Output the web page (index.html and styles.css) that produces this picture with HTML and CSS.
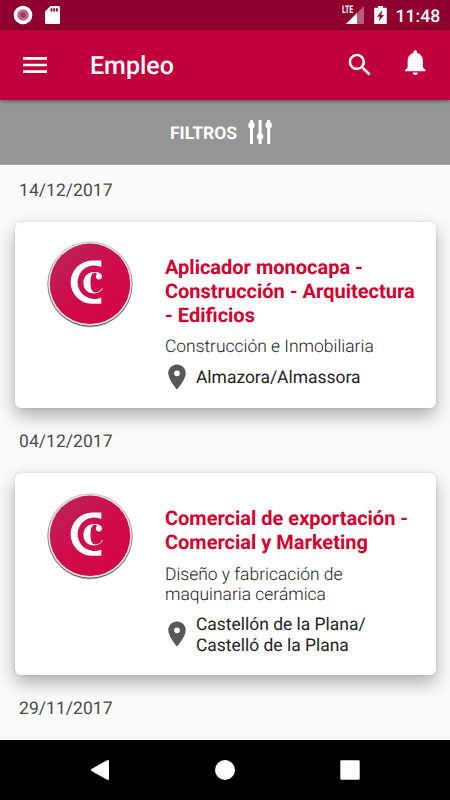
FILE: index.html
```html
<!DOCTYPE html>
<html lang="es">
<head>
<meta charset="utf-8">
<title>Empleo</title>
<link rel="stylesheet" href="styles.css">
</head>
<body>
<svg class="defs" width="0" height="0" aria-hidden="true">
  <defs>
    <linearGradient id="disc" x1="0.1" y1="0.1" x2="0.8" y2="0.9">
      <stop offset="0" stop-color="#bd2257"/>
      <stop offset="0.55" stop-color="#d00b4a"/>
      <stop offset="1" stop-color="#d40545"/>
    </linearGradient>
    <linearGradient id="rim" x1="0" y1="0" x2="0" y2="1">
      <stop offset="0" stop-color="#c8c8c8"/>
      <stop offset="0.5" stop-color="#999"/>
      <stop offset="1" stop-color="#555"/>
    </linearGradient>
    <symbol id="logo" viewBox="0 0 90 90">
      <circle cx="45" cy="46" r="42.500" fill="#000" opacity=".22"/>
      <circle cx="45" cy="45" r="42.200" fill="#e4e2e3" stroke="url(#rim)" stroke-width="1"/>
      <circle cx="45" cy="44.800" r="40.200" fill="url(#disc)"/>
      <path fill="#fff" d="M56.300 21.600H47.300A21.700 21.600 0 0 0 47.300 64.800H56.300V58.500A16.800 16.800 0 1 1 56.300 27.900Z"/>
      <path fill="#fff" d="M57 37.900A3.100 3.100 0 1 1 51.800 35.200C51.900 34.100 50.700 33.700 49.600 33.700C46.900 33.700 45.500 37.500 45.500 43.600C45.500 50 46.900 53.400 50.500 53.400C53.700 53.400 56 51.500 57 48.700L57.800 49.100C56.500 52.600 53.500 54.500 49.200 54.500C42.700 54.500 38.400 50.400 38.400 43.800C38.400 37.400 42.900 32.900 49.500 32.900C54 32.900 57.100 34.600 57 37.900Z"/>
    </symbol>
    <symbol id="pin" viewBox="0 0 24 24">
      <path fill="#555759" d="M12 2C8.130 2 5 5.130 5 9c0 5.250 7 13 7 13s7-7.750 7-13c0-3.870-3.130-7-7-7zm0 9.300a2.300 2.300 0 1 1 0-4.600 2.300 2.300 0 0 1 0 4.600z"/>
    </symbol>
  </defs>
</svg>
<div class="screen">
  <div class="status">
    <svg class="st-rec" viewBox="0 0 20 20"><circle cx="10" cy="10" r="9.300" fill="#fff"/><circle cx="10" cy="10" r="5.800" fill="#c0688a"/><circle cx="10" cy="10" r="2.800" fill="#a03960"/></svg>
    <svg class="st-sd" viewBox="0 0 15 18"><path fill="#fff" d="M5.500 0H13.500A1.500 1.500 0 0 1 15 1.500V16.500A1.500 1.500 0 0 1 13.500 18H1.500A1.500 1.500 0 0 1 0 16.500V5.500Z"/><path fill="#8f002e" d="M5.600 2.200h1.800v3.400h-1.800zM8.300 2.200h1.800v3.400h-1.800zM11 2.200h1.800v3.400h-1.800z"/></svg>
    <span class="lte">LTE</span>
    <svg class="st-sig" viewBox="0 0 18 18"><path fill="#b95c80" d="M18 0V18H0Z"/><path fill="#fff" d="M11 7V18H0Z"/></svg>
    <svg class="st-bat" viewBox="0 0 13 18"><path fill="#fff" d="M4 0h5v1.800h3a.8.8 0 0 1 .8.8v14.600a.8.8 0 0 1-.8.8H1a.8.8 0 0 1-.8-.8V2.600a.8.8 0 0 1 .8-.8h3z"/><path fill="#8f002e" d="M8.300 4.300 3 10.700h3L4.800 15.500 10 9H7.200z"/></svg>
    <span class="clock">11:48</span>
  </div>
  <header class="bar">
    <svg class="i-menu" viewBox="0 0 24 24"><path fill="#fff" d="M3 18h18v-2H3v2zm0-5h18v-2H3v2zm0-7v2h18V6H3z"/></svg>
    <h1>Empleo</h1>
    <svg class="i-search" viewBox="0 0 24 24"><path fill="#fff" d="M15.500 14h-.79l-.28-.27C15.410 12.590 16 11.110 16 9.500 16 5.910 13.090 3 9.500 3S3 5.910 3 9.500 5.910 16 9.500 16c1.610 0 3.090-.59 4.230-1.570l.27.28v.79l5 4.990L20.490 19l-4.990-5zm-6 0C7.010 14 5 11.990 5 9.500S7.010 5 9.500 5 14 7.010 14 9.500 11.990 14 9.500 14z"/></svg>
    <svg class="i-bell" viewBox="0 0 24 24"><path fill="#fff" d="M12 22c1.100 0 2-.9 2-2h-4c0 1.100.89 2 2 2zm6-6v-5c0-3.070-1.640-5.640-4.500-6.320V4c0-.83-.67-1.500-1.500-1.500s-1.500.67-1.500 1.500v.68C7.630 5.360 6 7.920 6 11v5l-2 2v1h16v-1l-2-2z"/></svg>
  </header>
  <div class="filters">
    <span>FILTROS</span>
    <svg viewBox="0 0 25 24"><path stroke="#fff" stroke-width="3" d="M3.500 0v24M12.100 0v24M20.700 0v24"/><g fill="#fff"><circle cx="3.500" cy="5.300" r="3.200"/><circle cx="12.100" cy="16.500" r="3.200"/><circle cx="20.700" cy="5.300" r="3.200"/></g></svg>
  </div>
  <main class="list">
    <div class="date">14/12/2017</div>
    <article class="card first">
      <svg class="logo"><use href="#logo"/></svg>
      <div class="info">
        <h2>Aplicador monocapa -<br>Construcción - Arquitectura<br>- Edificios</h2>
        <p class="sector">Construcción e Inmobiliaria</p>
        <div class="place"><svg><use href="#pin"/></svg><span>Almazora/Almassora</span></div>
      </div>
    </article>
    <div class="date">04/12/2017</div>
    <article class="card second">
      <svg class="logo"><use href="#logo"/></svg>
      <div class="info">
        <h2>Comercial de exportación -<br>Comercial y Marketing</h2>
        <p class="sector">Diseño y fabricación de<br>maquinaria cerámica</p>
        <div class="place"><svg><use href="#pin"/></svg><span>Castellón de la Plana/<br>Castelló de la Plana</span></div>
      </div>
    </article>
    <div class="date last">29/11/2017</div>
  </main>
  <nav class="nav">
    <svg viewBox="0 0 20 20"><path fill="#fff" d="M17.600 0Q19 0 19 1.200V18.800Q19 20 17.600 20L1.500 11Q.2 10 1.500 9Z"/></svg>
    <svg viewBox="0 0 20 20"><circle cx="10" cy="10" r="10" fill="#fff"/></svg>
    <svg viewBox="0 0 20 20"><rect x=".3" y=".3" width="19.400" height="19.400" rx="1.200" fill="#fff"/></svg>
  </nav>
</div>
</body>
</html>
```
FILE: styles.css
```css
* { box-sizing: border-box; }
body { margin: 0; font-family: Roboto, "Liberation Sans", sans-serif; background: #fafafa; text-rendering: geometricPrecision; }
svg { display: block; flex: none; }
h1, h2, p { margin: 0; }
.defs { position: absolute; }
.screen { width: 450px; height: 800px; display: flex; flex-direction: column; overflow: hidden; }

.status { flex: none; height: 30px; background: #8f002e; display: flex; align-items: center; padding: 0 10px 0 12.600px; color: #fff; }
.st-rec { width: 20px; height: 20px; }
.st-sd { width: 15px; height: 18px; margin-left: 12.400px; }
.lte { margin-left: auto; align-self: flex-start; margin-top: 4px; font-size: 10.500px; line-height: 12px; font-weight: 700; width: 12px; margin-right: -8px; transform: scaleX(.66); transform-origin: left; }
.st-sig { width: 18px; height: 18px; margin-right: 10px; clip-path: polygon(0 48%, 50% 48%, 50% 0, 100% 0, 100% 100%, 0 100%); }
.st-bat { width: 13px; height: 18px; margin-right: 8.500px; }
.clock { width: 44.500px; font-size: 17.600px; font-weight: 500; line-height: 24px; margin-top: 3px; white-space: nowrap; }

.bar { flex: none; height: 70px; background: #c0003d; display: flex; align-items: flex-start; padding-left: 19px; color: #fff; box-shadow: 0 1px 4px rgba(0,0,0,.45); position: relative; }
.i-menu { width: 32px; height: 32px; margin-top: 18.500px; }
.bar h1 { font-size: 25px; font-weight: 500; line-height: 30px; margin: 22px auto 0 39px; }
.i-search { width: 30px; height: 30px; margin-top: 19.800px; }
.i-bell { width: 30.600px; height: 30.600px; margin: 17px 19.500px 0 25px; }

.filters { flex: none; height: 64.500px; background: #959595; color: #fff; display: flex; align-items: center; padding: 1px 0 0 170px; gap: 10px; font-size: 17.500px; font-weight: 700; border-bottom: 1px solid #a9a9a9; }
.filters span { width: 68px; white-space: nowrap; padding-top: 3px; }
.filters svg { width: 25px; height: 24px; }

.list { flex: 1; min-height: 0; background: #fafafa; overflow: hidden; }
.date { height: 57px; padding: 15px 0 0 19px; font-size: 17.500px; line-height: 22px; color: #4b4b4b; letter-spacing: .05px; }
.card { margin: 0 14.500px; background: #fff; border-radius: 6px; display: flex; align-items: flex-start; box-shadow: 0 8px 18px rgba(0,0,0,.3), 0 0 3px rgba(0,0,0,.12); }
.card.first { height: 186px; }
.card.second { height: 202px; }
.card + .date { height: 65.500px; padding-top: 23px; }
.card + .date.last { margin-top: 20.500px; padding-top: 2.500px; height: 50px; background: #fafafa; position: relative; }
.logo { width: 90px; height: 90px; margin: 17.500px 0 0 30.200px; }
.info { margin: 33px 0 0 30.300px; }
.info h2 { font-size: 20px; font-weight: 700; line-height: 24px; color: #d0002f; white-space: nowrap; }
.sector { font-size: 17.450px; font-weight: 300; line-height: 20.500px; color: #222; margin-top: 10.500px; white-space: nowrap; }
.place { display: flex; align-items: center; color: #222; font-size: 17.450px; line-height: 20.500px; margin: 4px 0 0 -3px; white-space: nowrap; gap: 4px; }
.place svg { width: 30px; height: 30px; }
.place span { padding-top: 2.500px; }
.second .place { margin-top: 7px; }
.second .place svg { margin-top: -1px; }

.nav { flex: none; height: 60px; background: #000; display: flex; justify-content: space-between; align-items: center; padding: 0 90px; position: relative; }
.nav svg { width: 20px; height: 20px; }
```
